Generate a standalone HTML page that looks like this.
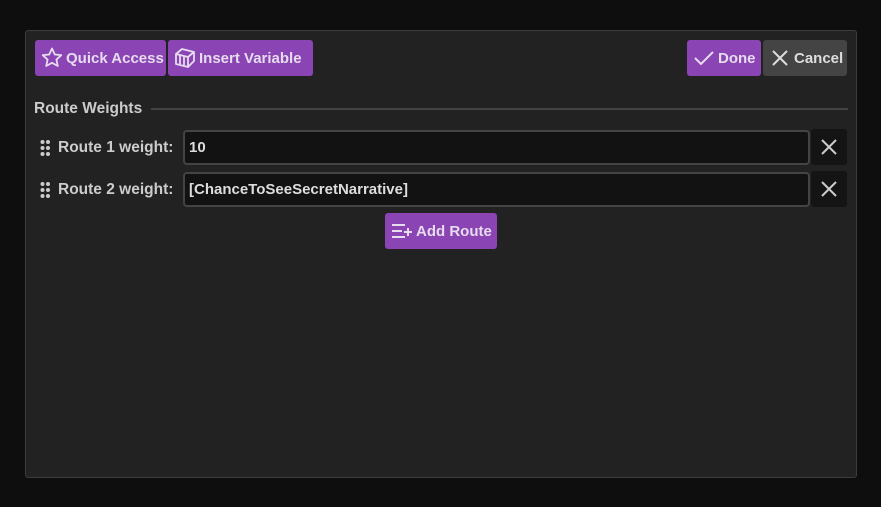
<!DOCTYPE html>
<html><head><style>
*{box-sizing:border-box;margin:0;padding:0}
body{width:881px;height:507px;background:#0e0e0e;font-family:"Liberation Sans",sans-serif;font-weight:bold;font-size:15px;color:#ddd;position:relative;overflow:hidden}
.panel{position:absolute;left:25px;top:30px;width:832px;height:448px;background:#222;border:1px solid #3c3c3c;border-radius:3px}
.btn{position:absolute;height:36px;border-radius:3px;background:#8a44b4;color:#e6dcee;display:flex;align-items:center;gap:2px;padding-left:5px;white-space:nowrap}
.btn svg{flex:none}
.abs{position:absolute}
.inp{position:absolute;left:183px;width:627px;height:35px;background:#121212;border:2px solid #444;border-radius:4px;padding-left:4px;display:flex;align-items:center;color:#ddd;font-size:15px}
.x{position:absolute;left:811px;width:36px;height:36px;background:#141414;border-radius:3px;display:flex;align-items:center;justify-content:center}
.lbl{position:absolute;left:40px;display:flex;align-items:center;gap:8px;color:#ccc;font-size:15.5px}
</style></head><body>
<div class="panel"></div>
<div class="btn" style="left:35px;top:40px;width:131px">
<svg width="24" height="24" viewBox="0 0 24 24" fill="none" stroke="#e6dcee" stroke-width="1.8" stroke-linejoin="round"><path d="M12 2.5l2.8 6 6.5.7-4.9 4.4 1.4 6.4L12 16.8 6.2 20l1.4-6.4L2.7 9.2l6.5-.7z"/></svg>Quick Access</div>
<div class="btn" style="left:168px;top:40px;width:145px">
<svg width="24" height="24" viewBox="0 0 24 24" fill="none" stroke="#e6dcee" stroke-width="1.8" stroke-linejoin="round"><path d="M3 8l6-5 12 3v9l-6 6-12-3z M3 8l12 3 6-5 M15 11v10 M7 9v9 M11 10v9"/></svg>Insert Variable</div>
<div class="btn" style="left:687px;top:40px;width:74px">
<svg width="24" height="24" viewBox="0 0 24 24" fill="none" stroke="#e6dcee" stroke-width="2"><path d="M3 12l6 6L21 6"/></svg>Done</div>
<div class="btn" style="left:763px;top:40px;width:84px;background:#444;color:#ddd">
<svg width="24" height="24" viewBox="0 0 24 24" fill="none" stroke="#ddd" stroke-width="2"><path d="M5 5l14 14M19 5L5 19"/></svg>Cancel</div>
<div class="abs" style="left:34px;top:100px;color:#ccc;font-size:15.5px">Route Weights</div>
<div class="abs" style="left:151px;top:108px;width:697px;height:2px;background:#444"></div>

<div class="lbl" style="top:138px"><svg width="10" height="20" viewBox="0 0 10 20" fill="#ccc"><circle cx="2.5" cy="4" r="2"/><circle cx="8" cy="4" r="2"/><circle cx="2.5" cy="10" r="2"/><circle cx="8" cy="10" r="2"/><circle cx="2.5" cy="16" r="2"/><circle cx="8" cy="16" r="2"/></svg>Route 1 weight:</div>
<div class="inp" style="top:130px">10</div>
<div class="x" style="top:129px"><svg width="18" height="18" viewBox="0 0 18 18" stroke="#ccc" stroke-width="2"><path d="M2 2l14 14M16 2L2 16"/></svg></div>

<div class="lbl" style="top:180px"><svg width="10" height="20" viewBox="0 0 10 20" fill="#ccc"><circle cx="2.5" cy="4" r="2"/><circle cx="8" cy="4" r="2"/><circle cx="2.5" cy="10" r="2"/><circle cx="8" cy="10" r="2"/><circle cx="2.5" cy="16" r="2"/><circle cx="8" cy="16" r="2"/></svg>Route 2 weight:</div>
<div class="inp" style="top:172px">[ChanceToSeeSecretNarrative]</div>
<div class="x" style="top:171px"><svg width="18" height="18" viewBox="0 0 18 18" stroke="#ccc" stroke-width="2"><path d="M2 2l14 14M16 2L2 16"/></svg></div>

<div class="btn" style="left:385px;top:213px;width:112px">
<svg width="24" height="24" viewBox="0 0 24 24" fill="none" stroke="#e6dcee" stroke-width="2"><path d="M2 6h13M2 12h10M2 18h13M18 9v8M14 13h8"/></svg>Add Route</div>
</body></html>
